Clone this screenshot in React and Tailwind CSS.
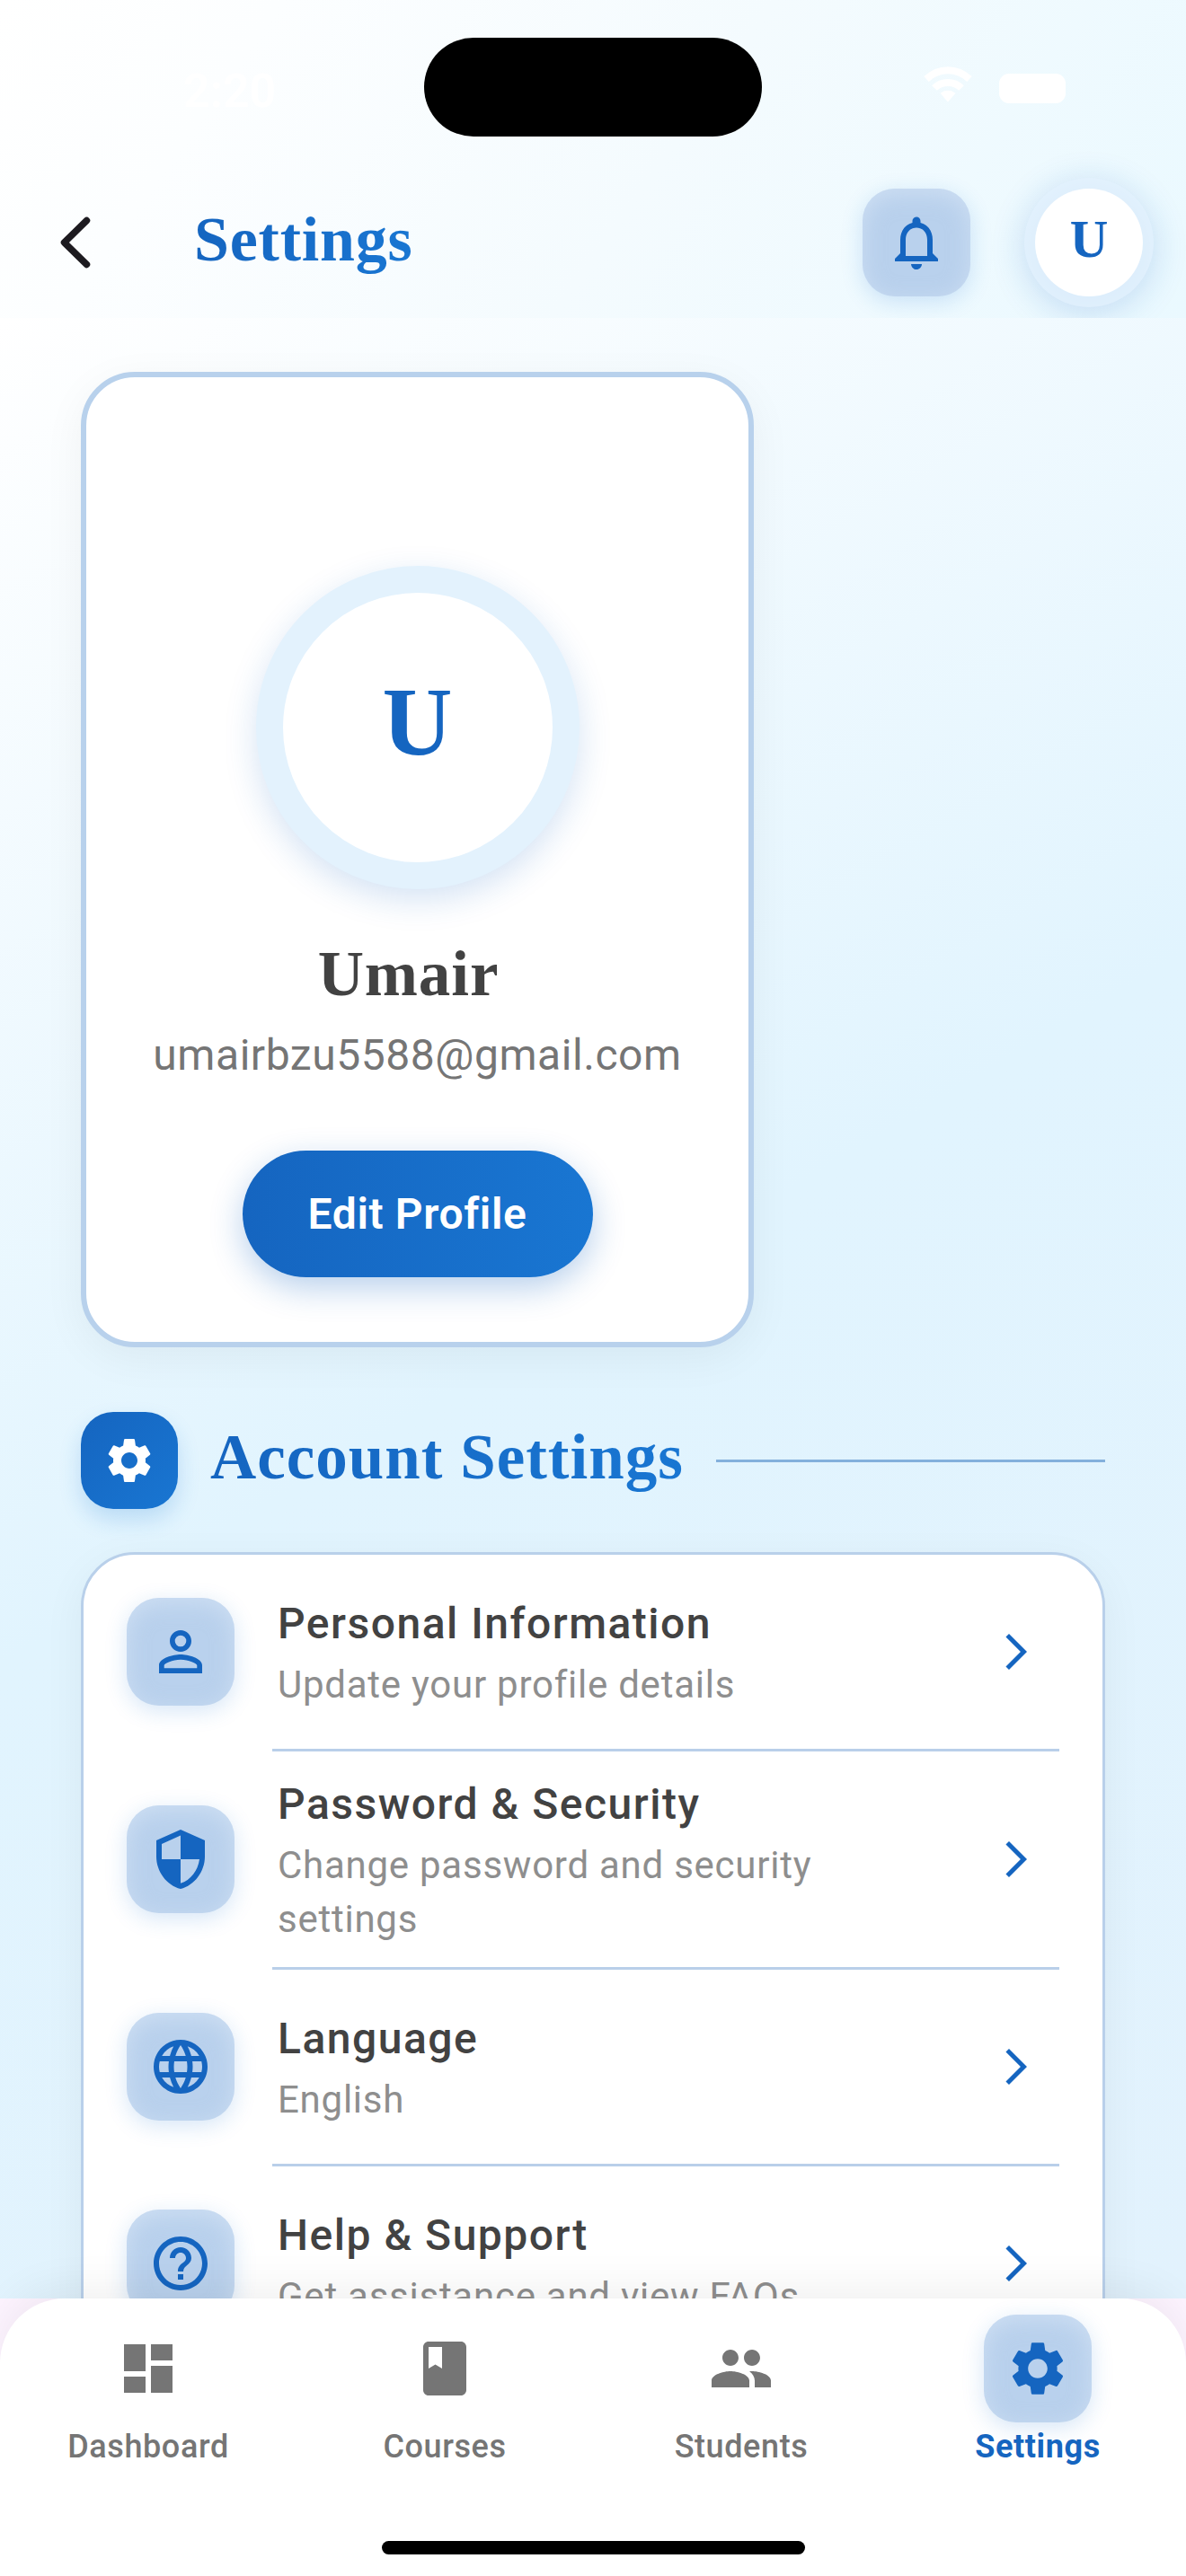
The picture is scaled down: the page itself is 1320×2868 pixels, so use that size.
import { MdOutlineNotifications, MdPersonOutline, MdSecurity, MdLanguage, MdHelpOutline, MdDashboard, MdBook, MdPeople, MdSettings, MdArrowForwardIos } from "react-icons/md";

const SERIF = "font-['Liberation_Serif',serif] font-bold";
const GRADIENT = "bg-linear-to-r from-[#1565c0] to-[#1976d2] bg-clip-text text-transparent";

const rows = [
  { icon: MdPersonOutline, title: "Personal Information", sub: "Update your profile details", height: "h-[216px]" },
  { icon: MdSecurity, title: "Password & Security", sub: "Change password and security settings", height: "h-[240px]" },
  { icon: MdLanguage, title: "Language", sub: "English", height: "h-[216px]" },
  { icon: MdHelpOutline, title: "Help & Support", sub: "Get assistance and view FAQs", height: "h-[216px]" },
];

const tabs = [
  { icon: MdDashboard, label: "Dashboard" },
  { icon: MdBook, label: "Courses" },
  { icon: MdPeople, label: "Students" },
  { icon: MdSettings, label: "Settings", active: true },
];

function IconTile({ icon: Icon, size = 72 }) {
  return (
    <div className="flex size-[120px] shrink-0 items-center justify-center rounded-[36px] bg-[#b9d1ed] text-[#1565c0] shadow-[0_6px_24px_rgba(25,118,210,0.18),inset_0_6px_24px_rgba(227,238,250,0.5)]">
      <Icon size={size} />
    </div>
  );
}

function StatusBar() {
  return (
    <div className="flex h-[186px] items-start justify-between">
      <div className="mt-[74px] ml-[204px] w-[268px] text-[52px] leading-[56px] font-semibold text-white">2:20</div>
      <div className="mt-[42px] h-[110px] w-[376px] rounded-full bg-black" />
      <div className="mt-[74px] flex w-[472px] items-center gap-[30px] pl-[180px] text-white">
        <svg width="54" height="42" viewBox="0 0 54 42" fill="none" stroke="currentColor" strokeWidth="8">
          <path d="M3 14C17 1 37 1 51 14M12 24c8-8 22-8 30 0" />
          <path d="M27 38l-7-8c4-3 10-3 14 0z" fill="currentColor" strokeWidth="2" />
        </svg>
        <div className="mt-[6px] h-[33px] w-[74px] rounded-[11px] bg-white" />
      </div>
    </div>
  );
}

export default function App() {
  return (
    <div className="flex h-[2868px] w-[1320px] flex-col overflow-hidden bg-[#fdf4ff] font-['Roboto',sans-serif]">
      <header className="h-[354px] shrink-0 overflow-hidden bg-[linear-gradient(125deg,#ffffff_0%,#fcfeff_20%,#f4fbfe_55%,#eaf9ff_100%)]">
        <StatusBar />
        <div className="flex h-[168px] items-center pl-[60px]">
          <svg width="48" height="64" viewBox="0 0 48 64" fill="none" stroke="#1d1b20" strokeWidth="7.5" strokeLinecap="round" strokeLinejoin="round">
            <path d="M36.500 7.500L11.500 32l25 24.500" />
          </svg>
          <h1 className={`${SERIF} ${GRADIENT} mb-[6px] ml-[108px] text-[70px] leading-[84px] tracking-[0.8px]`}>Settings</h1>
          <div className="ml-auto flex gap-[72px] pr-12">
            <IconTile icon={MdOutlineNotifications} />
            <div className={`${SERIF} flex size-[120px] items-center justify-center rounded-full bg-white pb-2 text-[59px] text-[#1565c0] shadow-[0_0_0_12px_rgba(227,242,253,0.75),0_6px_36px_14px_rgba(21,101,192,0.18)]`}>U</div>
          </div>
        </div>
      </header>

      <main className="h-[2205px] shrink-0 overflow-hidden bg-[linear-gradient(149deg,#ffffff_0%,#e1f4fe_50%,#e2f2fd_100%)] px-[90px] pt-[60px]">
        <section className="flex h-[1086px] w-[749px] flex-col items-center rounded-[60px] border-[6px] border-[#b8d1ec] bg-white pt-[210px] shadow-[0_12px_48px_rgba(0,0,0,0.05)]">
          <div className={`${SERIF} flex size-[360px] shrink-0 items-center justify-center rounded-full border-[30px] border-[#e3f2fd] bg-white pb-3 text-[108px] text-[#1565c0] shadow-[0_12px_36px_rgba(21,101,192,0.18)]`}>U</div>
          <h2 className={`${SERIF} mt-[52px] mr-[20px] text-[71px] leading-[84px] tracking-[0.9px] text-[#424242]`}>Umair</h2>
          <p className="mt-[13px] text-[48px] leading-[72px] tracking-[0.55px] text-[#757575]">umairbzu5588@gmail.com</p>
          <button className="mt-[70px] h-[141px] w-[390px] rounded-full bg-linear-to-r from-[#1565c0] to-[#1976d2] text-[48px] font-semibold tracking-[0.6px] text-white shadow-[0_12px_36px_rgba(21,101,192,0.3)]">Edit Profile</button>
        </section>

        <div className="mt-[72px] flex items-center">
          <div className="flex size-[108px] items-center justify-center rounded-[36px] bg-linear-to-br from-[#1565c0] to-[#1976d2] text-white shadow-[0_12px_24px_rgba(25,118,210,0.2)]">
            <MdSettings size={60} />
          </div>
          <h2 className={`${SERIF} ${GRADIENT} mb-[8px] ml-9 text-[71px] leading-[84px] tracking-[1px]`}>Account Settings</h2>
          <div className="ml-9 h-[3px] flex-1 bg-[#83b0dc]" />
        </div>

        <section className="mt-12 rounded-[60px] border-[3px] border-[#b9d0ea] bg-white shadow-[0_12px_48px_rgba(0,0,0,0.05)]">
          {rows.map((row, i) => (
            <div key={row.title}>
              {i > 0 && <div className="mr-12 ml-[210px] h-[3px] bg-[#b9cfe9]" />}
              <div className={`${row.height} flex items-center pl-12`}>
                <IconTile icon={row.icon} />
                <div className="ml-12 w-[750px]">
                  <div className="text-[48px] leading-[72px] font-medium tracking-[1.5px] text-[#424242]">{row.title}</div>
                  <div className="mt-[2px] text-[42px] leading-[60px] tracking-[0.75px] text-[#8e8e8e]">{row.sub}</div>
                </div>
                <MdArrowForwardIos size={48} className="ml-12 text-[#1565c0]" />
              </div>
            </div>
          ))}
        </section>
      </main>

      <nav className="relative flex flex-1 flex-col rounded-t-[72px] bg-white shadow-[0_-12px_48px_rgba(0,0,0,0.06)]">
        <div className="grid grid-cols-4 pt-[18px]">
          {tabs.map(({ icon: Icon, label, active }) => (
            <div key={label} className="flex flex-col items-center">
              {active ? <IconTile icon={Icon} /> : <div className="flex size-[120px] items-center justify-center text-[#757575]"><Icon size={72} /></div>}
              <span className={active ? "mt-[5px] text-[36px] leading-[44px] font-bold tracking-[0.6px] text-[#1565c0]" : "mt-[5px] text-[36px] leading-[44px] font-medium tracking-[0.6px] text-[#757575]"}>{label}</span>
            </div>
          ))}
        </div>
        <div className="mt-auto mb-6 ml-[425px] h-[15px] w-[471px] rounded-full bg-black" />
      </nav>
    </div>
  );
}
